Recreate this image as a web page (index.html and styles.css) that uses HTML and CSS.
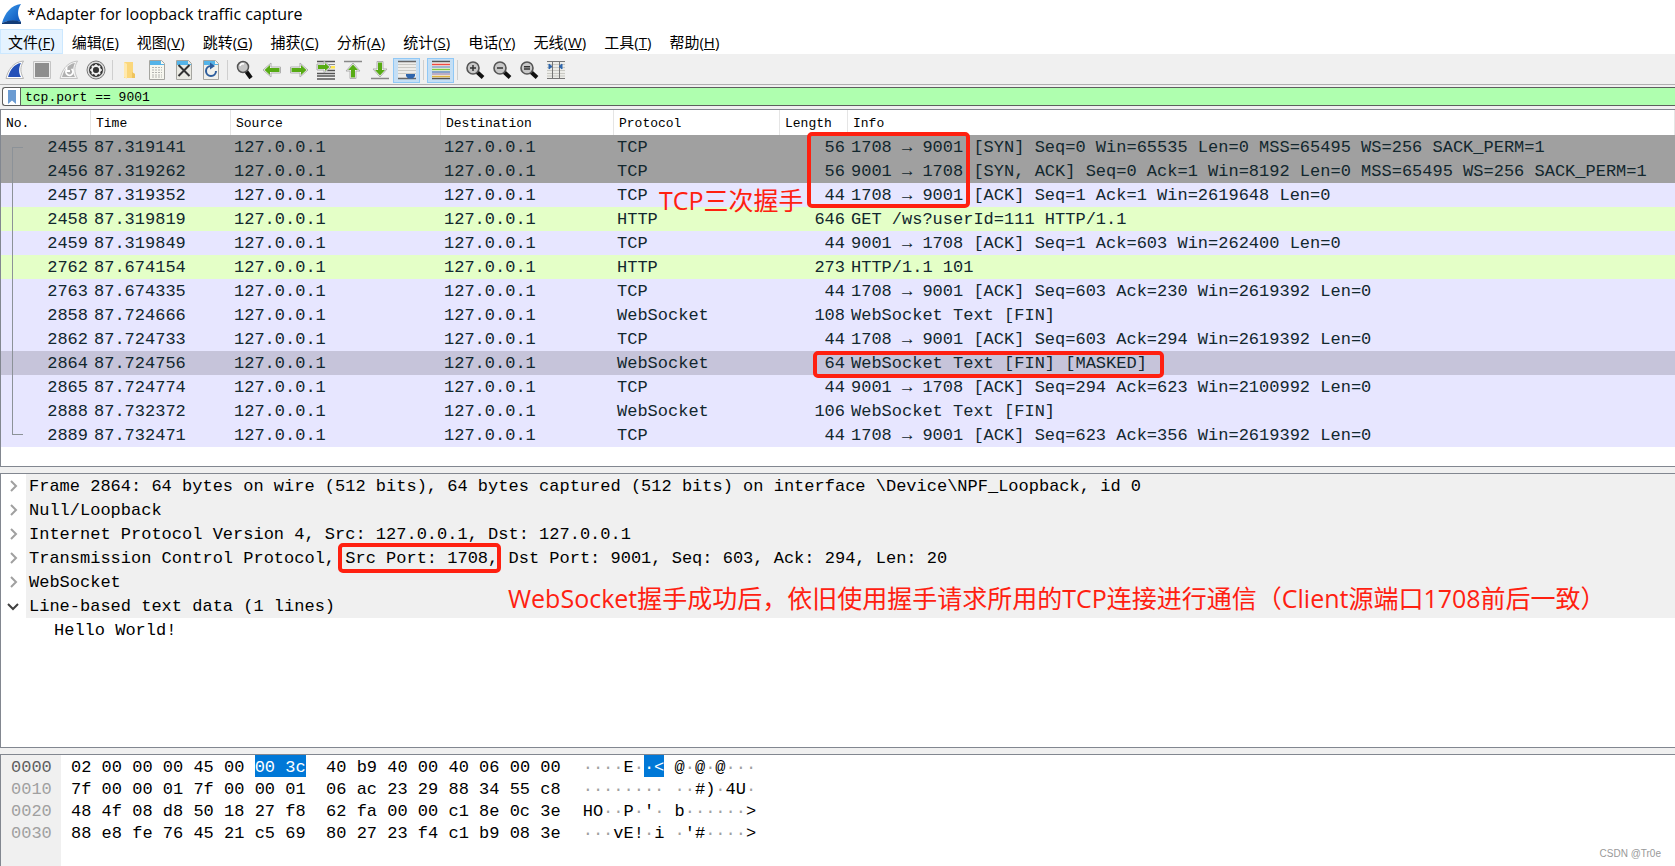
FILE: index.html
```html
<!DOCTYPE html>
<html lang="zh-CN">
<head>
<meta charset="utf-8">
<title>*Adapter for loopback traffic capture</title>
<link rel="stylesheet" href="styles.css">
</head>
<body>
<div class="window">
<header class="titlebar">
<svg class="logo" viewBox="0 0 20 20" aria-hidden="true"><defs><linearGradient id="fin" x1="0" y1="0" x2="1" y2="1"><stop offset="0" stop-color="#3fa0f0"/><stop offset="1" stop-color="#0a50b8"/></linearGradient></defs><path d="M0 19C3 9 9 1 19 0C15 6 15 12 19 18Q9 15 0 19Z" fill="url(#fin)"/><path d="M0 19Q10 14 19 18V20H0Z" fill="#123c78"/></svg>
<h1 class="title">*Adapter for loopback traffic capture</h1>
</header>
<nav class="menubar" aria-label="菜单">
<button class="menu menu-active">文件(<u>F</u>)</button>
<button class="menu">编辑(<u>E</u>)</button>
<button class="menu">视图(<u>V</u>)</button>
<button class="menu">跳转(<u>G</u>)</button>
<button class="menu">捕获(<u>C</u>)</button>
<button class="menu">分析(<u>A</u>)</button>
<button class="menu">统计(<u>S</u>)</button>
<button class="menu">电话(<u>Y</u>)</button>
<button class="menu">无线(<u>W</u>)</button>
<button class="menu">工具(<u>T</u>)</button>
<button class="menu">帮助(<u>H</u>)</button>
</nav>
<div class="toolbar" role="toolbar">
<button class="tool" aria-label="开始捕获"><svg viewBox="0 0 20 20"><path d="M1 18.500C3 10 8 2 18.500 1C15 7 15 12 18.500 18.500Z" fill="#fff" stroke="#b5b5b5"/><path d="M3 17C5 10 9 4 16 3C13.500 8 13.500 13 16 17Z" fill="#2450b8"/></svg></button>
<button class="tool" aria-label="停止捕获"><svg viewBox="0 0 20 20"><path d="M1.500 1.500h17v17h-17z" fill="#eee" stroke="#c4c4c4"/><path d="M3 3h14v14H3z" fill="#8e8e8e"/></svg></button>
<button class="tool" aria-label="重新捕获"><svg viewBox="0 0 20 20"><path d="M1 18.500C3 10 8 2 18.500 1C15 7 15 12 18.500 18.500Z" fill="#f4f4f4" stroke="#c4c4c4"/><path d="M3 17C5 10 9 4 16 3C13.500 8 13.500 13 16 17Z" fill="#b0b0b0"/><path d="M12.500 9a3.500 3.500 0 1 1-5 1M7.500 7v4h3.500" fill="none" stroke="#fff" stroke-width="1.800"/></svg></button>
<button class="tool" aria-label="捕获选项"><svg viewBox="0 0 20 20"><circle cx="10" cy="10" r="9" fill="#ddd" stroke="#777"/><circle cx="10" cy="10" r="7" fill="#333"/><circle cx="10" cy="10" r="4" fill="none" stroke="#eee" stroke-width="2"/><path d="M10 4v12M4 10h12M5.800 5.800l8.400 8.400M14.200 5.800l-8.400 8.400" stroke="#eee" stroke-width="1.500"/><circle cx="10" cy="10" r="3" fill="#333"/></svg></button>
<span class="divider"></span>
<button class="tool" aria-label="打开"><svg viewBox="0 0 20 20"><path d="M4 2h9v11l2 1v4H4z" fill="#fbd77b"/><path d="M4 2l3 2v15l-3-2z" fill="#ffe9ae"/><path d="M12 12l3 2v4h-3z" fill="#eec45e"/></svg></button>
<button class="tool" aria-label="保存"><svg viewBox="0 0 20 20"><path d="M2.500 .500h12l3 3v16h-15z" fill="#f7f7ef" stroke="#a5a5a0"/><path d="M3 1h11v3h3v1H3z" fill="#55b4e8"/><path d="M5 7.500h10M5 10h10M5 12.500h10M5 15h10M5 17h10" stroke="#b4b4b0" stroke-dasharray="2 1"/></svg></button>
<button class="tool" aria-label="关闭"><svg viewBox="0 0 20 20"><path d="M2.500 .500h12l3 3v16h-15z" fill="#e9e9e2" stroke="#a5a5a0"/><path d="M3 1h11v3h3v1H3z" fill="#55b4e8"/><path d="M4.500 5l11 11M15.500 5l-11 11" stroke="#333" stroke-width="2"/></svg></button>
<button class="tool" aria-label="重新加载"><svg viewBox="0 0 20 20"><path d="M2.500 .500h12l3 3v16h-15z" fill="#f1f1ec" stroke="#a5a5a0"/><path d="M3 1h11v3h3v1H3z" fill="#55b4e8"/><path d="M10 6a5 5 0 1 0 5 5" fill="none" stroke="#2d5d9c" stroke-width="2"/><path d="M9 2.500v7l5-3.500z" fill="#2d5d9c"/></svg></button>
<span class="divider"></span>
<button class="tool" aria-label="查找"><svg viewBox="0 0 20 20"><path d="M11 11l5 7" stroke="#111" stroke-width="4"/><circle cx="8" cy="7" r="5.500" fill="#c6c6c6" stroke="#555" stroke-width="1.500"/><path d="M5 6q1-3 4-2" stroke="#fff" fill="none" stroke-width="1.500"/></svg></button>
<button class="tool" aria-label="后退"><svg viewBox="0 0 20 20"><path d="M1 10l8-7v4h9.500v6H9v4z" fill="#f4f4f4" stroke="#b0b0b0"/><path d="M2.500 10L8 5v3h9.500v4H8v3z" fill="#57ab14"/></svg></button>
<button class="tool" aria-label="前进"><svg viewBox="0 0 20 20"><path d="M19 10l-8-7v4H1.500v6H11v4z" fill="#f4f4f4" stroke="#b0b0b0"/><path d="M17.500 10L12 5v3H2.500v4H12v3z" fill="#57ab14"/></svg></button>
<button class="tool" aria-label="转到分组"><svg viewBox="0 0 20 20"><path d="M1 1.500h18M1 13.500h18M1 16h18M1 19h18M11 10.500h8" stroke="#555" stroke-width="1.500"/><path d="M12 4.500h7" stroke="#888"/><path d="M13 6h6v2.500h-6z" fill="#ffe650"/><path d="M15 7L8 1v3H1v6h7v3z" fill="#f4f4f4" stroke="#aaa"/><path d="M13.500 7L9 3V5H2v4h7v2z" fill="#57ab14"/></svg></button>
<button class="tool" aria-label="首个分组"><svg viewBox="0 0 20 20"><path d="M1 1.500h18" stroke="#888" stroke-width="1.500"/><path d="M10 3l7 8h-4v7.500H7V11H3z" fill="#f4f4f4" stroke="#b0b0b0"/><path d="M10 4.500l5 5.500h-3v7.500H8V10H5z" fill="#57ab14"/></svg></button>
<button class="tool" aria-label="最后分组"><svg viewBox="0 0 20 20"><path d="M1 18.500h18" stroke="#888" stroke-width="1.500"/><path d="M10 17L3 9h4V1.500h6V9h4z" fill="#f4f4f4" stroke="#b0b0b0"/><path d="M10 15.500l5-5.500h-3V2.500H8V10H5z" fill="#57ab14"/></svg></button>
<button class="tool tool-on" aria-label="自动滚动"><svg viewBox="0 0 20 20"><path d="M1 1h18v18H1z" fill="#ededea"/><path d="M1 4.500h18M1 7.500h18M1 10.500h18M1 13.500h18" stroke="#c9c9c4"/><path d="M1 1.500h18M1 18.500h18" stroke="#666" stroke-width="1.300"/><path d="M9 14h9v2l-2 2.500h-5L9 16z" fill="#2f66ad"/></svg></button>
<span class="divider"></span>
<button class="tool tool-on" aria-label="着色"><svg viewBox="0 0 20 20"><path d="M1 1h18v18H1z" fill="#f4f4f0"/><path d="M1 1.500h18M1 18.500h18" stroke="#555" stroke-width="1.300"/><path d="M1 4.500h18" stroke="#ef4a42" stroke-width="1.500"/><path d="M1 7h18" stroke="#4b78b5"/><path d="M1 9.500h18" stroke="#82c945" stroke-width="1.500"/><path d="M1 12h18" stroke="#4b78b5" stroke-width="1.300"/><path d="M1 14h18" stroke="#85679b"/><path d="M1 16.500h18" stroke="#dfb33e" stroke-width="1.500"/></svg></button>
<span class="divider"></span>
<button class="tool" aria-label="放大"><svg viewBox="0 0 20 20"><path d="M12 12l6 5.500" stroke="#111" stroke-width="4"/><circle cx="8" cy="8" r="6" fill="#c8c8c8" stroke="#555" stroke-width="1.600"/><path d="M5 8h6M8 5v6" stroke="#333" stroke-width="1.500"/></svg></button>
<button class="tool" aria-label="缩小"><svg viewBox="0 0 20 20"><path d="M12 12l6 5.500" stroke="#111" stroke-width="4"/><circle cx="8" cy="8" r="6" fill="#c8c8c8" stroke="#555" stroke-width="1.600"/><path d="M5 8h6" stroke="#333" stroke-width="1.500"/></svg></button>
<button class="tool" aria-label="普通大小"><svg viewBox="0 0 20 20"><path d="M12 12l6 5.500" stroke="#111" stroke-width="4"/><circle cx="8" cy="8" r="6" fill="#c8c8c8" stroke="#555" stroke-width="1.600"/><path d="M5 6.800h6M5 9h6" stroke="#333" stroke-width="1.500"/></svg></button>
<button class="tool" aria-label="调整列宽"><svg viewBox="0 0 20 20"><path d="M1 1h18v18H1z" fill="#ecece8"/><path d="M1 4.500h18M1 7.500h18M1 10.500h18M1 13.500h18M1 16h18" stroke="#c9c9c4"/><path d="M1 1.500h18M1 18.500h18M6.500 1v18M13.500 1v18" stroke="#777"/><path d="M3 4l3 2.500L3 9zM16 4l-3 2.500L16 9z" fill="#2f66ad" stroke="#2f66ad"/></svg></button>
</div>
<div class="filterbar">
<button class="bookmark" aria-label="书签"><svg viewBox="0 0 10 14"><path d="M1 0h8v14l-4-3.500L1 14z" fill="#6b9bd2"/></svg></button>
<input class="filter" type="text" aria-label="显示过滤器" value="tcp.port == 9001">
</div>
<main class="panes">
<section class="pane packets">
<table class="list">
<colgroup><col class="c-no"><col class="c-time"><col class="c-src"><col class="c-dst"><col class="c-proto"><col class="c-len"><col></colgroup>
<thead><tr><th>No.</th><th>Time</th><th>Source</th><th>Destination</th><th>Protocol</th><th>Length</th><th>Info</th></tr></thead>
<tbody>
<tr class="syn"><td class="num">2455</td><td>87.319141</td><td>127.0.0.1</td><td>127.0.0.1</td><td>TCP</td><td class="num">56</td><td>1708 → 9001 [SYN] Seq=0 Win=65535 Len=0 MSS=65495 WS=256 SACK_PERM=1</td></tr>
<tr class="syn"><td class="num">2456</td><td>87.319262</td><td>127.0.0.1</td><td>127.0.0.1</td><td>TCP</td><td class="num">56</td><td>9001 → 1708 [SYN, ACK] Seq=0 Ack=1 Win=8192 Len=0 MSS=65495 WS=256 SACK_PERM=1</td></tr>
<tr class="tcp"><td class="num">2457</td><td>87.319352</td><td>127.0.0.1</td><td>127.0.0.1</td><td>TCP</td><td class="num">44</td><td>1708 → 9001 [ACK] Seq=1 Ack=1 Win=2619648 Len=0</td></tr>
<tr class="http"><td class="num">2458</td><td>87.319819</td><td>127.0.0.1</td><td>127.0.0.1</td><td>HTTP</td><td class="num">646</td><td>GET /ws?userId=111 HTTP/1.1</td></tr>
<tr class="tcp"><td class="num">2459</td><td>87.319849</td><td>127.0.0.1</td><td>127.0.0.1</td><td>TCP</td><td class="num">44</td><td>9001 → 1708 [ACK] Seq=1 Ack=603 Win=262400 Len=0</td></tr>
<tr class="http"><td class="num">2762</td><td>87.674154</td><td>127.0.0.1</td><td>127.0.0.1</td><td>HTTP</td><td class="num">273</td><td>HTTP/1.1 101</td></tr>
<tr class="tcp"><td class="num">2763</td><td>87.674335</td><td>127.0.0.1</td><td>127.0.0.1</td><td>TCP</td><td class="num">44</td><td>1708 → 9001 [ACK] Seq=603 Ack=230 Win=2619392 Len=0</td></tr>
<tr class="tcp"><td class="num">2858</td><td>87.724666</td><td>127.0.0.1</td><td>127.0.0.1</td><td>WebSocket</td><td class="num">108</td><td>WebSocket Text [FIN]</td></tr>
<tr class="tcp"><td class="num">2862</td><td>87.724733</td><td>127.0.0.1</td><td>127.0.0.1</td><td>TCP</td><td class="num">44</td><td>1708 → 9001 [ACK] Seq=603 Ack=294 Win=2619392 Len=0</td></tr>
<tr class="selected"><td class="num">2864</td><td>87.724756</td><td>127.0.0.1</td><td>127.0.0.1</td><td>WebSocket</td><td class="num">64</td><td>WebSocket Text [FIN] [MASKED]</td></tr>
<tr class="tcp"><td class="num">2865</td><td>87.724774</td><td>127.0.0.1</td><td>127.0.0.1</td><td>TCP</td><td class="num">44</td><td>9001 → 1708 [ACK] Seq=294 Ack=623 Win=2100992 Len=0</td></tr>
<tr class="tcp"><td class="num">2888</td><td>87.732372</td><td>127.0.0.1</td><td>127.0.0.1</td><td>WebSocket</td><td class="num">106</td><td>WebSocket Text [FIN]</td></tr>
<tr class="tcp"><td class="num">2889</td><td>87.732471</td><td>127.0.0.1</td><td>127.0.0.1</td><td>TCP</td><td class="num">44</td><td>1708 → 9001 [ACK] Seq=623 Ack=356 Win=2619392 Len=0</td></tr>
</tbody>
</table>
<span class="flow"></span>
<span class="mark mark-handshake"></span>
<span class="mark mark-masked"></span>
<span class="note note-handshake">TCP三次握手</span>
</section>
<section class="pane details">
<ul class="tree">
<li class="node"><svg class="arrow" viewBox="0 0 12 12"><path d="M4 1l5 5-5 5"/></svg><span class="label">Frame 2864: 64 bytes on wire (512 bits), 64 bytes captured (512 bits) on interface \Device\NPF_Loopback, id 0</span></li>
<li class="node"><svg class="arrow" viewBox="0 0 12 12"><path d="M4 1l5 5-5 5"/></svg><span class="label">Null/Loopback</span></li>
<li class="node"><svg class="arrow" viewBox="0 0 12 12"><path d="M4 1l5 5-5 5"/></svg><span class="label">Internet Protocol Version 4, Src: 127.0.0.1, Dst: 127.0.0.1</span></li>
<li class="node"><svg class="arrow" viewBox="0 0 12 12"><path d="M4 1l5 5-5 5"/></svg><span class="label">Transmission Control Protocol, Src Port: 1708, Dst Port: 9001, Seq: 603, Ack: 294, Len: 20</span></li>
<li class="node"><svg class="arrow" viewBox="0 0 12 12"><path d="M4 1l5 5-5 5"/></svg><span class="label">WebSocket</span></li>
<li class="node"><svg class="arrow arrow-open" viewBox="0 0 12 12"><path d="M1 4l5 5 5-5"/></svg><span class="label">Line-based text data (1 lines)</span></li>
<li class="leaf">Hello World!</li>
</ul>
<span class="mark mark-port"></span>
<span class="note note-port">WebSocket握手成功后，依旧使用握手请求所用的TCP连接进行通信（Client源端口1708前后一致）</span>
</section>
<section class="pane bytes">
<pre class="offsets"><b>0000</b>
0010
0020
0030</pre>
<pre class="hex"><span>02 00 00 00 45 00 </span><mark>00 3c</mark><span>  40 b9 40 00 40 06 00 00</span>
<span>7f 00 00 01 7f 00 00 01  06 ac 23 29 88 34 55 c8</span>
<span>48 4f 08 d8 50 18 27 f8  62 fa 00 00 c1 8e 0c 3e</span>
<span>88 e8 fe 76 45 21 c5 69  80 27 23 f4 c1 b9 08 3e</span></pre>
<pre class="ascii"><i>····</i>E<i>·</i><mark>·&lt;</mark> @<i>·</i>@<i>·</i>@<i>···</i>
<i>········</i> <i>··</i>#)<i>·</i>4U<i>·</i>
HO<i>··</i>P<i>·</i>'<i>·</i> b<i>······</i>&gt;
<i>···</i>vE!<i>·</i>i <i>·</i>'#<i>····</i>&gt;</pre>
<span class="credit">CSDN @Tr0e</span>
</section>
</main>
</div>
</body>
</html>
```
FILE: styles.css
```css
* { box-sizing: border-box; }
body { margin: 0; background: #fff; color: #000; font-family: "Open Sans", "Noto Sans CJK SC", sans-serif; }
button { margin: 0; padding: 0; border: 0; background: none; color: inherit; font: inherit; }
.window { display: flex; flex-direction: column; min-height: 100vh; background: #f0f0f0; }
.titlebar { display: flex; align-items: center; gap: 5px; height: 29px; padding: 0 0 2px 2px; background: #fff; }
.logo { width: 20px; height: 20px; }
.title { margin: 0; font-size: 16px; font-weight: 400; line-height: 24px; }
.menubar { display: flex; height: 27px; background: #fff; border-bottom: 2px solid #f0f0f0; }
.menu { height: 25px; padding: 1px 8px 0; border: 1px solid transparent; font-size: 15px; line-height: 22px; white-space: nowrap; }
.menu-active { padding: 1px 7px 0; background: #e5f3ff; border-color: #cce8ff; }
.toolbar { display: flex; align-items: center; height: 29px; padding-left: 1px; border-bottom: 1px solid #b0b0b0; }
.tool { display: flex; align-items: center; justify-content: center; width: 27px; height: 25px; }
.tool svg { width: 20px; height: 20px; }
.tool-on { background: #c5dff5; border: 1px solid #90c8f6; }
.divider { width: 1px; height: 20px; margin: 0 3px; background: #cfcfcf; }
.filterbar { display: flex; height: 19px; margin: 2px 0 2px 2px; border: 1px solid #5e5e5e; border-right: 0; border-radius: 3px 0 0 3px; background: #fff; }
.bookmark { display: flex; align-items: center; justify-content: center; width: 18px; border-right: 1px solid #5e5e5e; }
.bookmark svg { width: 10px; height: 14px; }
.filter { flex: 1; min-width: 0; padding: 2px 0 0 4px; border: 0; outline: 0; background: #afffaf; color: #000; font: 13px/15px "Liberation Mono", monospace; }
.panes { display: flex; flex: 1; flex-direction: column; gap: 6px; margin-top: 1px; font: 17px/24px "Liberation Mono", monospace; }
.pane { position: relative; background: #fff; border: 1px solid #828790; border-right: 0; }
.packets { padding-bottom: 19px; }
.list { width: 100%; table-layout: fixed; border-collapse: separate; border-spacing: 0; }
.c-no { width: 90px; }
.c-time { width: 140px; }
.c-src { width: 210px; }
.c-dst { width: 173px; }
.c-proto { width: 166px; }
.c-len { width: 68px; }
.list th { height: 25px; padding: 3px 0 0 5px; border-right: 1px solid #e5e5e5; font-size: 13px; font-weight: 400; line-height: 22px; text-align: left; }
.list td { height: 24px; padding: 2px 3px 0; color: #12272e; line-height: 22px; white-space: pre; }
.list .num { text-align: right; }
.syn { background: #a0a0a0; }
.tcp { background: #e7e6ff; }
.http { background: #e4ffc7; }
.selected { background: #c6c4da; }
.flow { position: absolute; top: 37px; bottom: 31px; left: 11px; width: 11px; border: 1px solid #8c9298; border-right: 0; }
.mark { position: absolute; border: 4px solid #ff2010; border-radius: 5px; }
.mark-handshake { top: 22px; left: 806px; width: 163px; height: 76px; }
.mark-masked { top: 241px; left: 812px; width: 351px; height: 27px; }
.mark-port { top: 69px; left: 337px; width: 163px; height: 30px; }
.note { position: absolute; color: #ff2010; font: 25px/36px "Open Sans", "Noto Sans CJK SC", sans-serif; white-space: nowrap; }
.note-handshake { top: 72px; left: 658px; }
.note-port { top: 106px; left: 507px; }
.details { flex: 1; }
.tree { margin: 0; padding: 0; list-style: none; }
.node { display: flex; align-items: center; height: 24px; }
.arrow { width: 12px; height: 12px; margin: 0 7px 0 6px; fill: none; stroke: #a0a0a0; stroke-width: 2; }
.arrow-open { stroke: #404040; }
.label { flex: 1; padding: 2px 0 0 3px; background: #f0f0f0; line-height: 22px; white-space: pre; }
.leaf { padding: 2px 0 0 53px; line-height: 22px; }
.bytes { display: flex; height: 112px; border-bottom: 0; line-height: 22px; }
.bytes pre { margin: 0; padding-top: 2px; font: inherit; }
.bytes .offsets { width: 60px; padding-left: 10px; background: #f0f0f0; color: #a0a0a0; }
.bytes b { color: #606060; font-weight: 400; }
.bytes .hex { padding-left: 10px; }
.bytes .ascii { padding-left: 22px; }
.bytes i { color: #a0a0a0; font-style: normal; }
.bytes mark { padding: 3px 0 0; background: #0078d7; color: #fff; }
.credit { position: absolute; right: 14px; bottom: 4px; color: #999; font: 10px/16px "Liberation Sans", sans-serif; }
```
